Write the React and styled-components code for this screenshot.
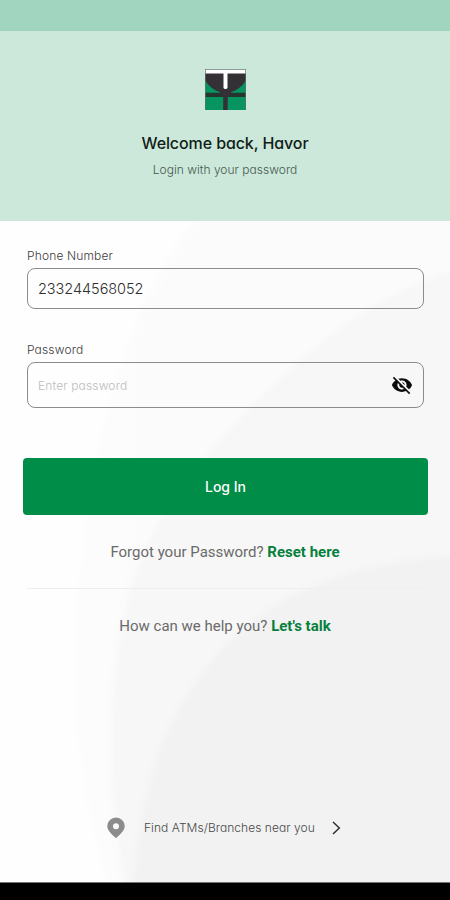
import React from 'react';
import styled, { createGlobalStyle } from 'styled-components';
import { MdVisibilityOff } from 'react-icons/md';

const GlobalStyle = createGlobalStyle`
  * {
    box-sizing: border-box;
  }

  body {
    margin: 0;
    background: #fff;
    font-family: Inter, 'Liberation Sans', sans-serif;
    /* single-storey a */
    font-feature-settings: 'cv11' 1;
  }

  input,
  button {
    font-family: inherit;
    font-feature-settings: inherit;
  }
`;

const Screen = styled.div`
  position: relative;
  isolation: isolate;
  display: flex;
  flex-direction: column;
  width: 450px;
  height: 900px;
  overflow: hidden;
  background: #fefefe;
`;

const Backdrop = styled.svg`
  position: absolute;
  inset: 0;
  z-index: -1;
`;

const StatusBar = styled.div`
  height: 31px;
  background: #a2d5bf;
`;

const Header = styled.header`
  display: flex;
  flex-direction: column;
  align-items: center;
  height: 190px;
  padding-top: 38px;
  background: #cce8da;
`;

const Logo = styled.svg`
  display: block;
  margin-left: 1px;
`;

const Title = styled.h1`
  margin: 23px 0 0;
  font-size: 16px;
  line-height: 20px;
  font-weight: 500;
  letter-spacing: -0.1px;
  color: #121d18;
`;

const Subtitle = styled.p`
  margin: 9px 0 0;
  font-size: 12px;
  line-height: 16px;
  font-weight: 300;
  letter-spacing: 0.02px;
  color: #46584f;
`;

const Form = styled.form`
  display: flex;
  flex-direction: column;
  padding: 27px 22px 0 23px;
`;

const Field = styled.div`
  display: flex;
  flex-direction: column;
  margin: 0 4px 0 4px;
  padding-bottom: ${(props) => props.$gap}px;
`;

const Label = styled.label`
  margin-bottom: 4px;
  font-size: 12px;
  line-height: 16px;
  font-weight: 300;
  letter-spacing: 0.15px;
  color: #3c3c3c;
`;

const InputBox = styled.div`
  display: flex;
  align-items: center;
  height: ${(props) => props.$height}px;
  padding: 0 10px;
  border: 1px solid #8c8c8c;
  border-radius: 8px;
`;

const Input = styled.input`
  flex: 1;
  min-width: 0;
  padding: 0;
  border: 0;
  outline: 0;
  background: transparent;
  font-size: ${(props) => props.$size}px;
  font-weight: 300;
  letter-spacing: ${(props) => props.$tracking || 0}px;
  color: #2e2e2e;

  &::placeholder {
    color: #bcbcbc;
    opacity: 1;
  }
`;

const IconButton = styled.button`
  display: flex;
  padding: 0;
  border: 0;
  background: none;
  color: #0c0c0c;
`;

const LoginButton = styled.button`
  height: 57px;
  border: 0;
  border-radius: 4px;
  background: #008d47;
  color: #fff;
  font-size: 14px;
  font-weight: 500;
`;

const Prompt = styled.p`
  margin: 0;
  text-align: center;
  font-family: Roboto, sans-serif;
  font-size: 15px;
  line-height: 20px;
  color: #6a6a6a;
`;

const PromptLink = styled.a`
  font-weight: 700;
  color: #07803d;
`;

const Links = styled.section`
  display: flex;
  flex-direction: column;
  flex: 1;
  padding-top: 27px;
`;

const Divider = styled.hr`
  width: 396px;
  height: 1px;
  margin: 26px auto 27px;
  border: 0;
  background: #eeeeee;
`;

const BranchLink = styled.div`
  display: flex;
  align-items: center;
  height: 24px;
  margin: auto 0 42px 107px;
`;

const BranchText = styled.span`
  margin: 0 17px 0 19px;
  font-size: 12px;
  line-height: 16px;
  font-weight: 300;
  letter-spacing: 0.05px;
  white-space: nowrap;
  color: #484848;
`;

const NavBar = styled.div`
  height: 18px;
  border-top: 1px solid #777;
  background: #000;
`;

function BackgroundArcs() {
  return (
    <Backdrop width="450" height="900" viewBox="0 0 450 900">
      <defs>
        <linearGradient id="outer" x1="0" y1="0" x2="1" y2="0">
          <stop offset="0" stopColor="#fcfcfc" />
          <stop offset="1" stopColor="#fbfbfb" />
        </linearGradient>
        <filter id="soft">
          <feGaussianBlur stdDeviation="3" />
        </filter>
      </defs>
      <g filter="url(#soft)">
        <path
          d="M118 910C70 790 68 640 88 510C108 370 150 260 220 190H480V910Z"
          fill="url(#outer)"
        />
        <path
          d="M130 910C106 800 105 700 125 610C145 510 215 440 280 378C332 330 386 287 480 262V910Z"
          fill="#f7f7f7"
        />
        <path
          d="M130 910C138 832 145 780 169 728C196 670 244 618 300 592C352 569 400 558 480 554V910Z"
          fill="#f2f2f2"
        />
      </g>
    </Backdrop>
  );
}

function BankLogo() {
  return (
    <Logo width="41" height="41" viewBox="0 0 41 41">
      <rect width="41" height="41" fill="#079461" />
      <path d="M0 4H41V11C37.5 17 33 20.5 27.5 22.5L25 24H16L13.5 22.5C8 20.5 3.5 17 0 11Z" fill="#343035" />
      <path d="M0 23.8H41V28H0Z" fill="#26352f" />
      <path d="M15 23.5L20.5 20L26 23.5L22.7 28V41H18.2V28Z" fill="#343035" />
      <rect width="41" height="4.5" fill="#fff" />
      <path d="M18.5 4H22.5V18.5Q22.5 20 20.5 20Q18.5 20 18.5 18.5Z" fill="#fff" />
      <path d="M0 .5H41M.5 0V41M40.5 0V41" stroke="#5f7168" strokeWidth=".7" fill="none" />
    </Logo>
  );
}

function PinIcon() {
  return (
    <svg width="18" height="22" viewBox="0 0 18 22">
      <path
        fillRule="evenodd"
        d="M9 .5A8.7 8.7 0 0 0 .3 9.2C.3 14 5.2 17.2 9 21.3C12.8 17.2 17.7 14 17.7 9.2A8.7 8.7 0 0 0 9 .5ZM9 6.2A3 3 0 1 1 9 12.2A3 3 0 1 1 9 6.2Z"
        fill="#8c8c8c"
      />
    </svg>
  );
}

function ChevronIcon() {
  return (
    <svg width="9" height="14" viewBox="0 0 9 14">
      <path d="M1 1L7.3 7L1 13" fill="none" stroke="#303030" strokeWidth="1.5" />
    </svg>
  );
}

export default function App() {
  return (
    <>
      <GlobalStyle />
      <Screen>
        <BackgroundArcs />
        <StatusBar />
        <Header>
          <BankLogo />
          <Title>Welcome back, Havor</Title>
          <Subtitle>Login with your password</Subtitle>
        </Header>

        <Form onSubmit={(e) => e.preventDefault()}>
          <Field $gap={33}>
            <Label htmlFor="phone">Phone Number</Label>
            <InputBox $height={41}>
              <Input id="phone" defaultValue="233244568052" $size={14.5} $tracking={-0.05} />
            </InputBox>
          </Field>
          <Field $gap={50}>
            <Label htmlFor="password">Password</Label>
            <InputBox $height={46}>
              <Input
                id="password"
                type="password"
                placeholder="Enter password"
                $size={12}
                $tracking={0.15}
              />
              <IconButton type="button" aria-label="Show password">
                <MdVisibilityOff size={22} />
              </IconButton>
            </InputBox>
          </Field>
          <LoginButton type="submit">Log In</LoginButton>
        </Form>

        <Links>
          <Prompt>
            Forgot your Password? <PromptLink>Reset here</PromptLink>
          </Prompt>
          <Divider />
          <Prompt>
            How can we help you? <PromptLink>Let's talk</PromptLink>
          </Prompt>
          <BranchLink>
            <PinIcon />
            <BranchText>Find ATMs/Branches near you</BranchText>
            <ChevronIcon />
          </BranchLink>
        </Links>
        <NavBar />
      </Screen>
    </>
  );
}
